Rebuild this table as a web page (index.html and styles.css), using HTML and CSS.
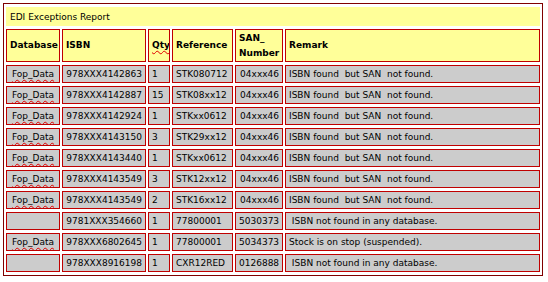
FILE: index.html
```html
<!DOCTYPE html>
<html>
<head>
<meta charset="utf-8">
<link rel="stylesheet" href="styles.css">
</head>
<body>
<table class="report">
  <colgroup>
    <col class="c-db"><col class="c-isbn"><col class="c-qty"><col class="c-ref"><col class="c-san"><col class="c-rem">
  </colgroup>
  <tr class="title-row"><td colspan="6" class="title">EDI Exceptions Report</td></tr>
  <tr class="head-row">
    <th>Database</th><th>ISBN</th><th><span class="sp">Qty</span></th><th>Reference</th><th>SAN_<br>Number</th><th>Remark</th>
  </tr>
  <tr><td class="db"><span class="sp">Fop_Data</span></td><td class="num">978XXX4142863</td><td>1</td><td>STK080712</td><td class="num">04xxx46</td><td>ISBN found&nbsp; but SAN&nbsp; not found.</td></tr>
  <tr><td class="db"><span class="sp">Fop_Data</span></td><td class="num">978XXX4142887</td><td>15</td><td>STK08xx12</td><td class="num">04xxx46</td><td>ISBN found&nbsp; but SAN&nbsp; not found.</td></tr>
  <tr><td class="db"><span class="sp">Fop_Data</span></td><td class="num">978XXX4142924</td><td>1</td><td>STKxx0612</td><td class="num">04xxx46</td><td>ISBN found&nbsp; but SAN&nbsp; not found.</td></tr>
  <tr><td class="db"><span class="sp">Fop_Data</span></td><td class="num">978XXX4143150</td><td>3</td><td>STK29xx12</td><td class="num">04xxx46</td><td>ISBN found&nbsp; but SAN&nbsp; not found.</td></tr>
  <tr><td class="db"><span class="sp">Fop_Data</span></td><td class="num">978XXX4143440</td><td>1</td><td>STKxx0612</td><td class="num">04xxx46</td><td>ISBN found&nbsp; but SAN&nbsp; not found.</td></tr>
  <tr><td class="db"><span class="sp">Fop_Data</span></td><td class="num">978XXX4143549</td><td>3</td><td>STK12xx12</td><td class="num">04xxx46</td><td>ISBN found&nbsp; but SAN&nbsp; not found.</td></tr>
  <tr><td class="db"><span class="sp">Fop_Data</span></td><td class="num">978XXX4143549</td><td>2</td><td>STK16xx12</td><td class="num">04xxx46</td><td>ISBN found&nbsp; but SAN&nbsp; not found.</td></tr>
  <tr><td class="db"></td><td class="num">9781XXX354660</td><td>1</td><td>77800001</td><td class="num">5030373</td><td>&nbsp;ISBN not found in any database.</td></tr>
  <tr><td class="db"><span class="sp">Fop_Data</span></td><td class="num">978XXX6802645</td><td>1</td><td>77800001</td><td class="num">5034373</td><td>Stock is on stop (suspended).</td></tr>
  <tr><td class="db"></td><td class="num">978XXX8916198</td><td>1</td><td>CXR12RED</td><td class="num">0126888</td><td>&nbsp;ISBN not found in any database.</td></tr>
</table>
</body>
</html>
```

FILE: styles.css
```css
body {
  margin: 3px;
  background: #ffffff;
  font-family: "DejaVu Sans", sans-serif;
  font-size: 9px;
  color: #000;
}
.report {
  border: 1px solid #800000;
  border-collapse: separate;
  border-spacing: 2px 3px;
  width: 540px;
  table-layout: fixed;
  padding: 0;
}
.c-db { width: 54px; }
.c-isbn { width: 84px; }
.c-qty { width: 22px; }
.c-ref { width: 61px; }
.c-san { width: 48px; }
.c-rem { width: 255px; }
td, th {
  box-sizing: border-box;
  border: 1px solid #c00000;
  background: #cccccc;
  padding: 0 3px;
  height: 18px;
  line-height: 14px;
  text-align: left;
  white-space: nowrap;
  overflow: hidden;
}
th {
  background: #ffff99;
  font-weight: bold;
  height: 33px;
  vertical-align: middle;
  line-height: 15px;
}
.title-row td {
  background: #ffff99;
  border: none;
  height: 19px;
  padding-left: 4px;
}
.num { text-align: right; }
.db { text-align: center; }
.sp {
  text-decoration: underline wavy #e00000;
  text-decoration-thickness: 1px;
  text-underline-offset: 2px;
}
```
